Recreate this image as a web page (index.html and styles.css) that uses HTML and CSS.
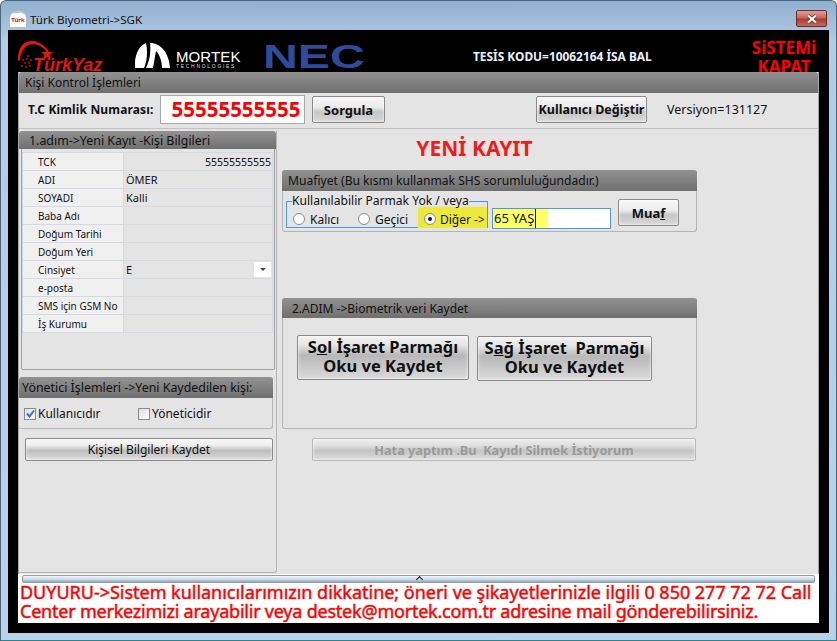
FILE: index.html
```html
<!DOCTYPE html>
<html lang="tr">
<head>
<meta charset="utf-8">
<title>Türk Biyometri->SGK</title>
<link rel="stylesheet" href="styles.css">
</head>
<body>
<div class="window">
  <div class="titlebar">
    <span class="app-icon"><span>Türk</span></span>
    <span class="title">Türk Biyometri-&gt;SGK</span>
    <span class="close"><svg width="16" height="10" viewBox="0 0 16 10"><path d="M4 1.500 12 8.500M12 1.500 4 8.500" stroke="#5a2a26" stroke-width="3.600" fill="none"/><path d="M4 1.500 12 8.500M12 1.500 4 8.500" stroke="#fff" stroke-width="2.200" fill="none"/></svg></span>
  </div>
  <div class="client">
    <div class="top">
      <div class="logos">
        <div class="turkyaz">
          <svg width="60" height="34" viewBox="0 0 60 34"><path d="M0 22C-1 9 6 1 15 2c8 1 14 7 18 14-6-6-11-10-17-11C9 4 3 11 2 21z" fill="#e31610"/><path d="M29 9l1.600 4 4.400.3-3.400 2.800 1.100 4.300-3.700-2.400-3.700 2.400 1.100-4.300-3.400-2.800 4.400-.3z" fill="#e31610"/><g fill="#b5130e"><circle cx="5" cy="21" r="1"/><circle cx="9" cy="20" r="1"/><circle cx="13" cy="21" r="1"/><circle cx="7" cy="24" r="1"/><circle cx="11" cy="24" r="1"/><circle cx="4" cy="27" r="1"/><circle cx="8" cy="28" r="1"/><circle cx="12" cy="27" r="1"/><circle cx="10" cy="17" r="1"/></g></svg>
          <span class="turkyaz-name">TürkYaz</span>
        </div>
        <div class="mortek">
          <svg width="36" height="26" viewBox="0 0 36 26"><path d="M0 25C-1 14 3 3 11 0 13 9 12 18 9 25Z" fill="#fff"/><path d="M15 0C26 0 34 10 35 25L27 25C27 18 24 10 21 8 20 13 19 20 18 25L11 25C15 17 16 8 15 0Z" fill="#fff"/></svg>
          <div class="mortek-text"><span class="mortek-name">MORTEK</span><span class="mortek-sub">TECHNOLOGIES</span></div>
        </div>
        <span class="nec">NEC</span>
      </div>
      <div class="tesis">TESİS KODU=10062164 İSA BAL</div>
      <div class="kapat">SiSTEMi<br>KAPAT</div>
    </div>
    <div class="panel-area">
      <section class="kisi">
        <h2 class="head">Kişi Kontrol İşlemleri</h2>
        <div class="kisi-row">
          <label class="tc-label">T.C Kimlik Numarası:</label>
          <div class="tc-input">55555555555</div>
          <button class="btn sorgula">Sorgula</button>
          <button class="btn degistir">Kullanıcı Değiştir</button>
          <span class="versiyon">Versiyon=131127</span>
        </div>
      </section>
      <div class="columns">
        <div class="left">
          <h2 class="head head-bilgi">1.adım-&gt;Yeni Kayıt -Kişi Bilgileri</h2>
          <section class="bilgi">
            <table class="grid">
              <tr><th>TCK</th><td class="num">55555555555</td></tr>
              <tr><th>ADI</th><td>ÖMER</td></tr>
              <tr><th>SOYADI</th><td>Kalli</td></tr>
              <tr><th>Baba Adı</th><td></td></tr>
              <tr><th>Doğum Tarihi</th><td></td></tr>
              <tr><th>Doğum Yeri</th><td></td></tr>
              <tr><th>Cinsiyet</th><td class="combo">E<span class="drop"></span></td></tr>
              <tr><th>e-posta</th><td></td></tr>
              <tr><th>SMS için GSM No</th><td></td></tr>
              <tr><th>İş Kurumu</th><td></td></tr>
            </table>
          </section>
          <section class="yonetici">
            <h2 class="head head-tight">Yönetici İşlemleri -&gt;Yeni Kaydedilen kişi:</h2>
            <div class="checks">
              <span class="check"><span class="cb"><svg width="9" height="9" viewBox="0 0 9 9"><path d="M1 4.500 3.500 7.500 8 1.500" stroke="#3b6fd0" stroke-width="2" fill="none"/></svg></span>Kullanıcıdır</span>
              <span class="check"><span class="cb"></span>Yöneticidir</span>
            </div>
          </section>
          <button class="btn wide">Kişisel Bilgileri Kaydet</button>
        </div>
        <div class="right">
          <div class="yeni">YENİ KAYIT</div>
          <section class="box muaf">
            <h2 class="head head-muaf">Muafiyet (Bu kısmı kullanmak SHS sorumluluğundadır.)</h2>
            <div class="muaf-row">
              <div class="group">
                <span class="legend">Kullanılabilir Parmak Yok / veya</span>
                <span class="radio"><span class="rb"></span>Kalıcı</span>
                <span class="radio radio-short"><span class="rb"></span>Geçici</span>
                <span class="radio hl"><span class="rb on"></span>Diğer -&gt;</span>
              </div>
              <div class="yas"><span class="yas-hl"><span class="yas-text">65 YAŞ</span></span></div>
              <button class="btn muaf-btn">Mua<u>f</u></button>
            </div>
          </section>
          <section class="box bio">
            <h2 class="head head-bio">2.ADIM -&gt;Biometrik veri Kaydet</h2>
            <div class="bio-row">
              <button class="btn big">S<u>o</u>l İşaret Parmağı<br>Oku ve Kaydet</button>
              <button class="btn big big2">S<u>a</u>ğ İşaret&nbsp; Parmağı<br>Oku ve Kaydet</button>
            </div>
          </section>
          <button class="btn hata">Hata yaptım .Bu&nbsp; Kayıdı Silmek İstiyorum</button>
        </div>
      </div>
    </div>
    <div class="footer">
      <div class="splitter"><span class="caret"></span></div>
      <div class="duyuru">DUYURU-&gt;Sistem kullanıcılarımızın dikkatine; öneri ve şikayetlerinizle ilgili 0 850 277 72 72 Call<br><span class="duyuru-second">Center merkezimizi arayabilir veya destek@mortek.com.tr adresine mail gönderebilirsiniz.</span></div>
    </div>
  </div>
</div>
</body>
</html>
```
FILE: styles.css
```css
* { box-sizing: border-box; }
html, body { margin: 0; padding: 0; }
body { width: 837px; height: 641px; overflow: hidden; background: #fff; font-family: "Noto Sans", "DejaVu Sans", sans-serif; font-size: 12px; color: #111; }
.window { width: 837px; height: 641px; padding: 0 7px 7px; background: linear-gradient(180deg, #8fb0cf 0, #b3cbe4 40px, #b9d1ea 100%); border: 1px solid #4a6678; border-bottom-color: #1f8c8c; border-radius: 6px 6px 0 0; display: flex; flex-direction: column; }
.titlebar { height: 29px; flex: none; display: flex; align-items: center; padding-top: 7px; }
.app-icon { width: 16px; height: 16px; background: #fff; margin-left: 2px; margin-right: 4px; display: flex; align-items: center; justify-content: center; font-size: 6px; font-weight: 700; color: #d01010; border-top: 2px solid #c4c4c4; border-radius: 6px 6px 0 0; }
.title { font-size: 11.6px; color: #111; }
.close { margin-left: auto; margin-right: 2px; margin-top: -1px; width: 31px; height: 17px; border: 1px solid #6a2a28; border-radius: 2px; background: linear-gradient(180deg, #dfa29a 0, #c9635a 45%, #b03a30 55%, #c46a5e 100%); display: flex; align-items: center; justify-content: center; }
.client { flex: 1; background: #000; display: flex; flex-direction: column; padding: 0 10px 10px; min-height: 0; }
.top { height: 42px; flex: none; position: relative; display: flex; color: #fff; overflow: hidden; }
.logos { display: flex; align-items: flex-start; }
.turkyaz { width: 108px; height: 42px; position: relative; }
.turkyaz svg { position: absolute; left: 0; top: 9px; }
.turkyaz-name { position: absolute; left: 15px; top: 24px; font: italic 700 18px/22px "Liberation Sans", sans-serif; color: #e31610; }
.mortek { display: flex; align-items: flex-start; gap: 5px; margin-left: 9px; padding-top: 13px; width: 128px; }
.mortek-text { display: flex; flex-direction: column; padding-top: 7px; }
.mortek-name { font: 400 15px/13px "Liberation Sans", sans-serif; letter-spacing: 0.1px; color: #fff; }
.mortek-sub { font: 400 5px/6px "Liberation Sans", sans-serif; letter-spacing: 1.7px; color: #ddd; }
.nec { font: 700 34px/28px "Liberation Sans", sans-serif; color: #2f4b9a; margin-top: 12px; transform: scaleX(1.42); transform-origin: left; }
.tesis { position: absolute; left: 455px; top: 19px; font: 700 11.9px/14px "Noto Sans", sans-serif; color: #eaf2ff; white-space: nowrap; }
.kapat { position: absolute; right: 0; top: 8px; width: 70px; text-align: center; font: 700 17px/19px "Noto Sans", sans-serif; color: #f00; }
.panel-area { flex: 1; min-height: 0; background: #e4e4e4; border: 1px solid #a8a8a8; border-width: 0 1px; display: flex; flex-direction: column; width: 801px; }
.head { margin: 0; height: 21px; font: 400 12px/22px "Noto Sans", sans-serif; color: #111; padding-left: 6px; background: linear-gradient(180deg, #929292 0, #6f6f6f 100%); border-radius: 3px 3px 0 0; white-space: nowrap; }
.kisi-row { height: 36px; display: flex; align-items: center; padding-bottom: 2px; border-bottom: 1px solid #c0c0c0; }
.tc-label { font: 700 12px "Noto Sans", sans-serif; letter-spacing: 0.15px; margin-left: 9px; width: 132px; white-space: nowrap; }
.tc-input { width: 145px; height: 29px; background: #fff; border: 1px solid #a8a8a8; color: #f00; font: 700 20.5px/27px "Noto Sans", sans-serif; text-align: center; white-space: nowrap; padding-left: 7px; }
.btn { font-family: "Noto Sans", sans-serif; color: #111; border: 1px solid #8a8a8a; border-radius: 2px; background: linear-gradient(180deg, #f6f6f6 0, #ececec 40%, #c6c6c6 60%, #d8d8d8 100%); box-shadow: inset 0 0 3px #fff; padding: 0; cursor: default; white-space: nowrap; }
.sorgula { width: 73px; height: 27px; margin-left: 7px; font-weight: 700; font-size: 13px; }
.degistir { width: 111px; height: 27px; margin-left: 151px; font-weight: 700; font-size: 12.5px; }
.versiyon { margin-left: 20px; font-size: 12.5px; }
.columns { flex: 1; display: grid; grid-template-columns: 258px 415px; column-gap: 5px; min-height: 0; margin-top: 2px; }
.left { display: flex; flex-direction: column; align-items: flex-start; border-right: 1px solid #b4b4b4; border-bottom: 1px solid #b4b4b4; border-radius: 0 0 3px 0; margin-bottom: 1px; }
.head-bilgi { height: 18px; width: 257px; line-height: 20px; padding-left: 10px; font-size: 12.4px; }
.bilgi { width: 254px; height: 221px; margin-left: 2px; border: 1px solid #a0a0a0; border-top: 0; padding-top: 3px; border-radius: 0 0 2px 2px; }
.grid { border-collapse: collapse; width: 251px; table-layout: fixed; border: 1px solid #9a9a9a; }
.grid th, .grid td { height: 18px; padding: 0; font-size: 11px; font-weight: 400; border: 1px solid #d4dae4; white-space: nowrap; overflow: hidden; text-align: left; }
.grid th { width: 101px; padding-left: 15px; background: #f0f0f0; font-size: 10px; }
.grid td { padding-left: 2px; }
.grid .num { text-align: right; padding-right: 1px; font-size: 10.5px; }
.combo { position: relative; }
.drop { position: absolute; right: 1px; top: 1px; width: 17px; height: 15px; background: #fff; }
.drop::after { content: ""; position: absolute; left: 6px; top: 6px; border: 3px solid transparent; border-top: 3px solid #444; }
.yonetici { width: 254px; height: 52px; margin-top: 7px; border-right: 1px solid #b4b4b4; border-bottom: 1px solid #b4b4b4; border-radius: 3px; }
.head-tight { padding-left: 3px; font-size: 12.4px; margin-right: -1px; }
.checks { display: flex; align-items: center; height: 30px; padding: 1px 0 0 5px; }
.check { display: flex; align-items: center; gap: 2px; width: 114px; font-size: 12px; }
.cb { width: 12px; height: 12px; border: 1px solid #8a8a8a; background: linear-gradient(135deg, #ddd, #fff); display: flex; align-items: center; justify-content: center; }
.wide { width: 248px; height: 23px; margin: 9px 0 0 6px; font-size: 12px; background: linear-gradient(180deg, #f8f8f8 0, #eee 30%, #bdbdbd 55%, #dcdcdc 100%); }
.right { display: flex; flex-direction: column; }
.yeni { height: 39px; text-align: center; font: 700 21px/22px "Noto Sans", sans-serif; color: #ee1c1c; padding: 6px 30px 0 0; }
.box { border: 1px solid #b4b4b4; border-top: 0; border-radius: 3px; }
.box .head { margin: 0 -1px; }
.box .head-muaf { font-size: 12.1px; }
.muaf { height: 62px; flex: none; }
.muaf-row { display: flex; align-items: flex-start; }
.group { width: 202px; height: 27px; margin: 10px 0 0 3px; border: 1px solid #4a9ae8; padding-left: 6px; display: flex; align-items: flex-end; position: relative; }
.legend { position: absolute; left: 5px; top: -7px; font-size: 12.1px; line-height: 12px; background: #e4e4e4; white-space: nowrap; }
.radio { display: flex; align-items: center; gap: 5px; font-size: 12px; width: 65px; height: 21px; padding-top: 3px; margin-bottom: -1px; }
.radio-short { width: 60px; }
.radio.hl { background: #ece93a; width: 69px; padding-left: 6px; gap: 4px; white-space: nowrap; }
.rb { width: 12px; height: 12px; border-radius: 50%; border: 1px solid #8a8a8a; background: #fff; display: inline-block; position: relative; flex: none; }
.rb.on::after { content: ""; position: absolute; left: 3px; top: 3px; width: 4px; height: 4px; border-radius: 50%; background: #111; }
.yas { width: 119px; height: 21px; background: #fff; border: 1px solid #4a9ae8; margin: 17px 0 0 4px; font-size: 13px; line-height: 19px; display: flex; }
.yas-hl { display: block; height: 19px; width: 55px; background: #ffff66; padding-left: 1px; }
.yas-text { display: inline-block; height: 19px; border-right: 1px solid #111; padding-right: 1px; white-space: nowrap; }
.muaf-btn { width: 61px; height: 27px; margin: 8px 0 0 7px; font-weight: 700; font-size: 13px; }
.bio { height: 131px; flex: none; margin-top: 66px; }
.box .head-bio { height: 20px; line-height: 22px; padding-left: 10px; }
.bio-row { display: flex; align-items: flex-start; gap: 8px; padding: 17px 0 0 14px; }
.big { width: 172px; height: 45px; padding-bottom: 3px; font-size: 16.5px; font-weight: 700; line-height: 19px; background: linear-gradient(180deg, #f2f2f2 0, #e6e6e6 20%, #b8b8b8 45%, #dadada 100%); }
.big2 { width: 175px; margin-top: 1px; }
.hata { width: 384px; height: 23px; margin: 9px 0 0 30px; font-weight: 700; font-size: 12.75px; color: #9a9a9a; border-color: #b8b8b8; background: linear-gradient(180deg, #ededed 0, #e0e0e0 30%, #c4c4c4 55%, #dcdcdc 100%); }
.footer { flex: none; width: 801px; height: 49px; background: #fff; }
.splitter { height: 8px; margin: 1px 4px 0; border: 1px solid #999; border-radius: 2px; background: linear-gradient(180deg, #f4f8fc 0, #c4d8ea 60%, #8fa6bc 100%); position: relative; }
.caret { position: absolute; left: 394px; top: 1px; width: 5px; height: 5px; border-left: 1.5px solid #111; border-top: 1.5px solid #111; transform: rotate(45deg); }
.duyuru { color: #f00; font: 400 18px/19px "Noto Sans", sans-serif; -webkit-text-stroke: 0.45px #f00; padding-left: 2px; white-space: nowrap; letter-spacing: -0.02px; }
.duyuru-second { letter-spacing: -0.22px; }
```
